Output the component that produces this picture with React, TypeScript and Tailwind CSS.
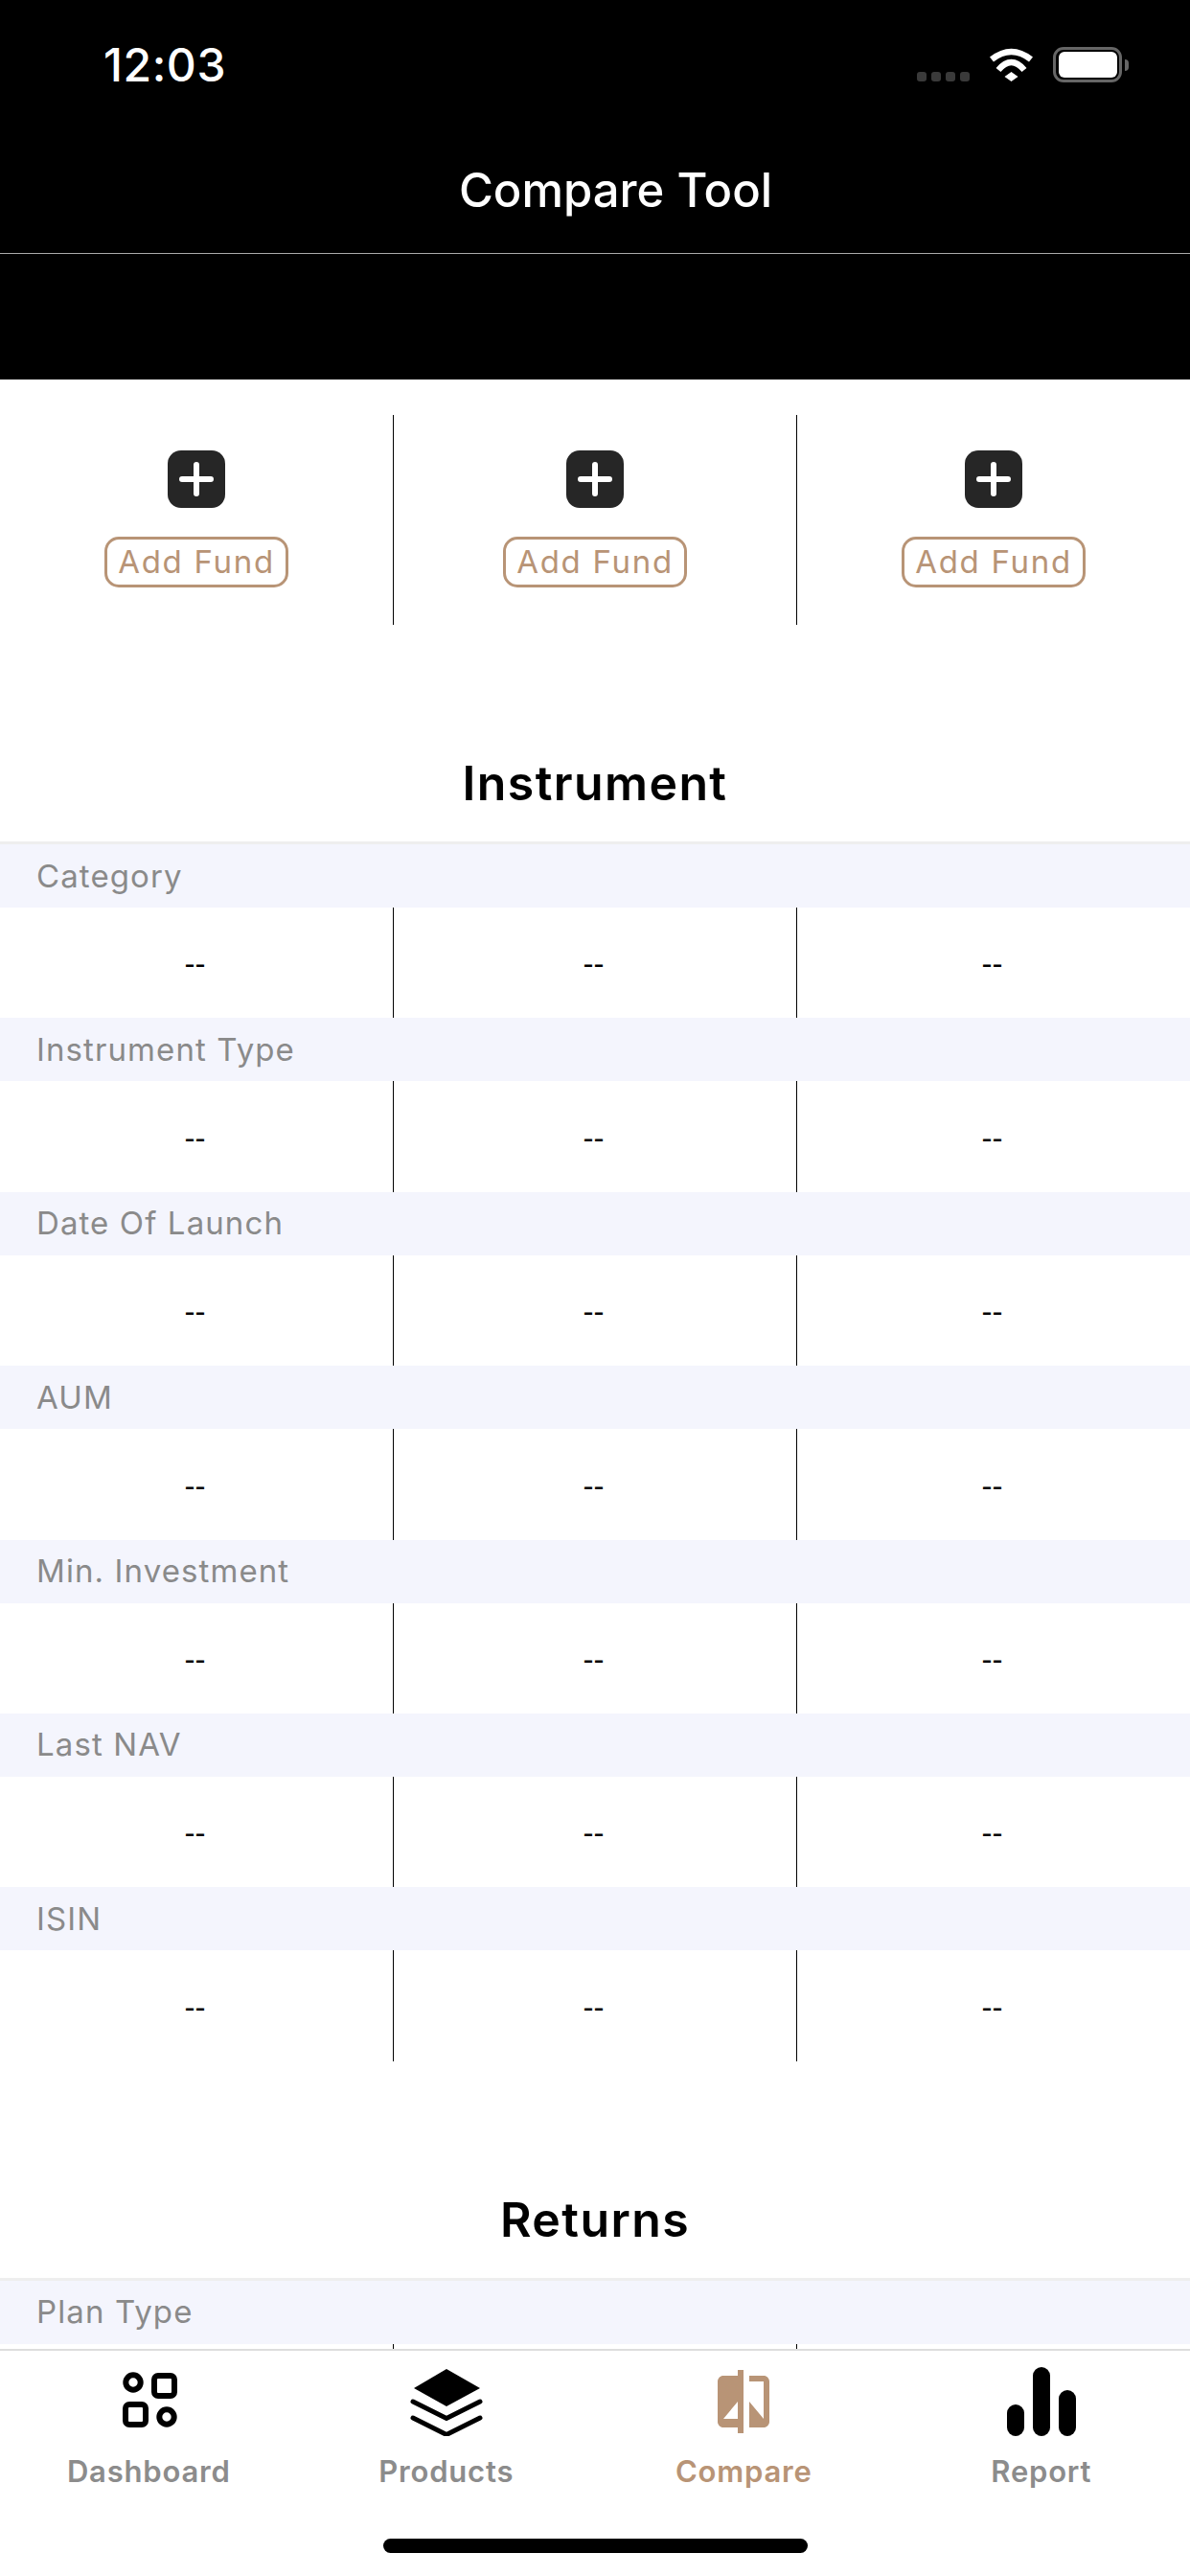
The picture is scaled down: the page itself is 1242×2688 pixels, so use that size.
import React from "react";

const rows = ["Category", "Instrument Type", "Date Of Launch", "AUM", "Min. Investment", "Last NAV", "ISIN"];

function Wifi() {
  return (
    <svg width="47" height="35" viewBox="0 0 47 35" className="block">
      <path d="M3 12 Q23.5 -4 44 12" fill="none" stroke="#fff" strokeWidth="6.5" />
      <path d="M10 23 Q23.5 7 37 23" fill="none" stroke="#fff" strokeWidth="6.5" />
      <path d="M16.5 30 L23.5 25 L30.5 30 L23.5 35 Z" fill="#fff" />
    </svg>
  );
}

function StatusBar() {
  return (
    <div className="flex h-[134px] items-start justify-between pt-[44px] pl-[108px] pr-[64px]">
      <span className="text-[48px] font-medium leading-[48px] tracking-[0.6px] text-white">12:03</span>
      <div className="mt-[5px] flex items-end">
        <div className="mb-[1px] flex gap-[5px]">
          {[0, 1, 2, 3].map((i) => (
            <div key={i} className="h-[10px] w-[10px] rounded-[3px] bg-[#3a3a3a]" />
          ))}
        </div>
        <div className="mb-[1px] ml-[20px]">
          <Wifi />
        </div>
        <div className="ml-[20px] flex items-center">
          <div className="h-[37px] w-[72px] rounded-[11px] border-[3px] border-[#666666] p-[2px] pl-[3px]">
            <div className="h-full w-full rounded-[6px] bg-white" />
          </div>
          <div className="ml-[3px] h-[12px] w-[4px] rounded-r-full bg-[#666666]" />
        </div>
      </div>
    </div>
  );
}

function AddFund() {
  return (
    <div className="flex flex-col items-center pt-[37px]">
      <div className="flex h-[60px] w-[60px] items-center justify-center rounded-[14px] bg-[#262626]">
        <svg width="36" height="36" viewBox="0 0 36 36">
          <path d="M18 3 V33 M3 18 H33" stroke="#fff" strokeWidth="6" strokeLinecap="round" />
        </svg>
      </div>
      <div className="mt-[30px] flex h-[53px] w-[192px] items-center justify-center rounded-[15px] border-[3px] border-[#b89476] text-[33px] leading-none tracking-[1.7px] text-[#b89476]">
        Add Fund
      </div>
    </div>
  );
}

function Title({ children, h }: { children: React.ReactNode; h: string }) {
  return (
    <div className={`flex items-end justify-center border-b-[3px] border-[#eeeeee] pb-[31px] ${h}`}>
      <span className="text-[50px] font-semibold leading-[60px] tracking-[1.4px] text-black">{children}</span>
    </div>
  );
}

function Band({ label }: { label: string }) {
  return (
    <div className="flex h-[66px] items-center bg-[#f4f5fd] pl-[38px] text-[33px] leading-none tracking-[1.1px] text-[#8a8a8a]">
      {label}
    </div>
  );
}

function ValueRow() {
  return (
    <div className="grid h-[115.4px] grid-cols-[411px_421px_410px]">
      <div className="flex items-center justify-center border-r border-black pr-[3px] pt-[3px] font-['Liberation_Sans',sans-serif] text-[33px] text-black">--</div>
      <div className="flex items-center justify-center border-r border-black pr-[3px] pt-[3px] font-['Liberation_Sans',sans-serif] text-[33px] text-black">--</div>
      <div className="flex items-center justify-center pr-[3px] pt-[3px] font-['Liberation_Sans',sans-serif] text-[33px] text-black">--</div>
    </div>
  );
}

function PeekDividers() {
  return (
    <div className="grid h-[5px] grid-cols-[411px_421px_410px]">
      <div className="border-r border-black" />
      <div className="border-r border-black" />
      <div />
    </div>
  );
}

function DashboardIcon() {
  return (
    <svg width="80" height="72" viewBox="0 0 80 72" fill="none" stroke="#000" strokeWidth="6">
      <circle cx="24" cy="16" r="7.7" />
      <rect x="46" y="9" width="21" height="21" rx="4" />
      <rect x="16" y="39" width="21" height="21" rx="4" />
      <circle cx="59" cy="52" r="7.7" />
    </svg>
  );
}

function LayersIcon() {
  return (
    <svg width="80" height="72" viewBox="0 0 80 72">
      <path d="M40 2 L75 22 L40 41 L6 22 Z" fill="#000" />
      <path d="M5 36 L40 53.5 L75 36 M5 53 L40 70.5 L75 53" fill="none" stroke="#000" strokeWidth="5" strokeLinecap="round" />
    </svg>
  );
}

function CompareIcon() {
  return (
    <svg width="80" height="72" viewBox="0 0 80 72">
      <g transform="translate(4 0) scale(3)">
        <path
          fill="#b89476"
          d="M10 3H5c-1.1 0-2 .9-2 2v14c0 1.1.9 2 2 2h5v2h2V1h-2v2zm0 15H5l5-6v6zm9-15h-5v2h5v13l-5-6v9h5c1.1 0 2-.9 2-2V5c0-1.1-.9-2-2-2z"
        />
      </g>
    </svg>
  );
}

function ReportIcon() {
  return (
    <svg width="80" height="72" viewBox="0 0 80 72" fill="#000">
      <rect x="4" y="39" width="18" height="33" rx="9" />
      <rect x="31" y="0" width="18" height="72" rx="9" />
      <rect x="58" y="24" width="18" height="48" rx="9" />
    </svg>
  );
}

function Tab({ icon, label, active }: { icon: React.ReactNode; label: string; active?: boolean }) {
  return (
    <div className="flex flex-col items-center">
      {icon}
      <span className={`mt-[17px] text-[31px] font-semibold leading-[40px] tracking-[0.8px] ${active ? "text-[#b89476]" : "text-[#8c8c8c]"}`}>
        {label}
      </span>
    </div>
  );
}

export default function App() {
  return (
    <div className="flex h-[2688px] w-[1242px] flex-col overflow-hidden bg-white font-[Inter,sans-serif]">
      <div className="h-[396px] shrink-0 bg-black">
        <StatusBar />
        <div className="flex h-[131px] items-center justify-center border-b border-[#aaaaaa] pb-[2px] pl-[43px] text-[49px] font-medium leading-none text-white">
          Compare Tool
        </div>
      </div>

      <div className="min-h-0 flex-1 overflow-hidden">
        <div className="pt-[37px]">
          <div className="grid h-[219px] grid-cols-[411px_421px_410px]">
            <div className="border-r border-black"><AddFund /></div>
            <div className="border-r border-black"><AddFund /></div>
            <div><AddFund /></div>
          </div>
        </div>
        <Title h="h-[229px]">Instrument</Title>
        {rows.map((r) => (
          <div key={r}>
            <Band label={r} />
            <ValueRow />
          </div>
        ))}
        <Title h="h-[229.2px]">Returns</Title>
        <Band label="Plan Type" />
        <PeekDividers />
      </div>

      <div className="flex h-[237px] shrink-0 flex-col border-t-2 border-[#dddddd] bg-white pt-[17px]">
        <div className="grid grid-cols-4">
          <Tab icon={<DashboardIcon />} label="Dashboard" />
          <Tab icon={<LayersIcon />} label="Products" />
          <Tab icon={<CompareIcon />} label="Compare" active />
          <Tab icon={<ReportIcon />} label="Report" />
        </div>
        <div className="mx-auto mt-[50px] h-[15px] w-[443px] rounded-full bg-black" />
      </div>
    </div>
  );
}
